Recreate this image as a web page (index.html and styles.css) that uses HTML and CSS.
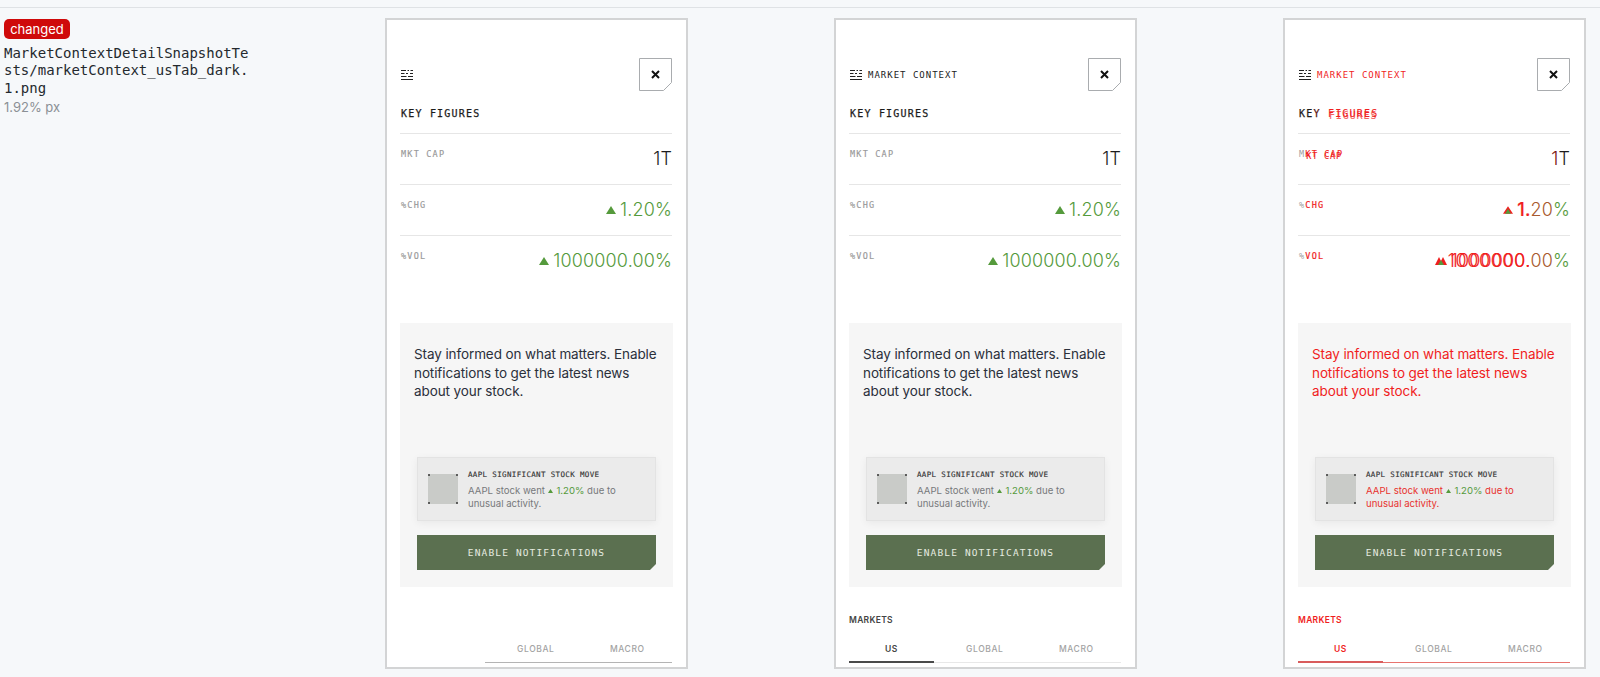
FILE: index.html
```html
<!DOCTYPE html>
<html lang="en">
<head>
    <meta charset="UTF-8">
    <title>marketContext_usTab_dark.1.png changed</title>
    <link rel="stylesheet" href="styles.css">
</head>
<body>
    <div class="topbar"></div>
    <div class="row">
        <div class="info">
            <span class="badge">changed</span>
            <div class="file-name">MarketContextDetailSnapshotTests/marketContext_usTab_dark.1.png</div>
            <div class="diff-size">1.92% px</div>
        </div>

        <div class="panels">
            <!-- before -->
            <div class="phone">
                <div class="header">
                    <div class="header-title">
                        <svg class="logo" viewBox="0 0 12 12"><path d="M0 1.5h5M6.5 1.5h1.5M9.5 1.5h2.5M0 4.5h3.5M5 4.5h2M9 4.5h3M0 7.5h5.5M7 7.5h5M0 10.5h12"/></svg>
                    </div>
                    <svg class="close" viewBox="0 0 33 33"><path class="close-box" d="M.5.5h32v24l-8 8H.5z"/><path class="close-x" d="M13 13l7 7M20 13l-7 7"/></svg>
                </div>
                <h2 class="section-title">KEY FIGURES</h2>
                <div class="stat"><span class="stat-label">MKT CAP</span><span class="stat-value">1T</span></div>
                <div class="stat"><span class="stat-label">%CHG</span><span class="stat-value up"><svg class="tri" viewBox="0 0 10 8"><path d="M5 0l5 8H0z"/></svg>1.20%</span></div>
                <div class="stat"><span class="stat-label">%VOL</span><span class="stat-value up"><svg class="tri" viewBox="0 0 10 8"><path d="M5 0l5 8H0z"/></svg>1000000.00%</span></div>

                <div class="promo">
                    <p class="promo-text">Stay informed on what matters. Enable notifications to get the latest news about your stock.</p>
                    <div class="notice">
                        <div class="thumb"><i></i><i></i><i></i><i></i></div>
                        <div>
                            <div class="notice-title">AAPL SIGNIFICANT STOCK MOVE</div>
                            <div class="notice-text">AAPL stock went <span class="up"><svg class="tri-small" viewBox="0 0 10 8"><path d="M5 0l5 8H0z"/></svg> 1.20%</span> due to<br>unusual activity.</div>
                        </div>
                    </div>
                    <div class="enable">ENABLE NOTIFICATIONS</div>
                </div>

                <div class="markets-title"></div>
                <div class="tabs tabs-old">
                    <div class="tab tab-empty"></div>
                    <div class="tab tab-global">GLOBAL</div>
                    <div class="tab tab-macro">MACRO</div>
                </div>
            </div>

            <!-- after -->
            <div class="phone">
                <div class="header">
                    <div class="header-title">
                        <svg class="logo" viewBox="0 0 12 12"><path d="M0 1.5h5M6.5 1.5h1.5M9.5 1.5h2.5M0 4.5h3.5M5 4.5h2M9 4.5h3M0 7.5h5.5M7 7.5h5M0 10.5h12"/></svg>
                        MARKET CONTEXT
                    </div>
                    <svg class="close" viewBox="0 0 33 33"><path class="close-box" d="M.5.5h32v24l-8 8H.5z"/><path class="close-x" d="M13 13l7 7M20 13l-7 7"/></svg>
                </div>
                <h2 class="section-title">KEY FIGURES</h2>
                <div class="stat"><span class="stat-label">MKT CAP</span><span class="stat-value">1T</span></div>
                <div class="stat"><span class="stat-label">%CHG</span><span class="stat-value up"><svg class="tri" viewBox="0 0 10 8"><path d="M5 0l5 8H0z"/></svg>1.20%</span></div>
                <div class="stat"><span class="stat-label">%VOL</span><span class="stat-value up"><svg class="tri" viewBox="0 0 10 8"><path d="M5 0l5 8H0z"/></svg>1000000.00%</span></div>

                <div class="promo">
                    <p class="promo-text">Stay informed on what matters. Enable notifications to get the latest news about your stock.</p>
                    <div class="notice">
                        <div class="thumb"><i></i><i></i><i></i><i></i></div>
                        <div>
                            <div class="notice-title">AAPL SIGNIFICANT STOCK MOVE</div>
                            <div class="notice-text">AAPL stock went <span class="up"><svg class="tri-small" viewBox="0 0 10 8"><path d="M5 0l5 8H0z"/></svg> 1.20%</span> due to<br>unusual activity.</div>
                        </div>
                    </div>
                    <div class="enable">ENABLE NOTIFICATIONS</div>
                </div>

                <div class="markets-title">MARKETS</div>
                <div class="tabs">
                    <div class="tab tab-active">US</div>
                    <div class="tab tab-global">GLOBAL</div>
                    <div class="tab tab-macro">MACRO</div>
                </div>
            </div>

            <!-- diff -->
            <div class="phone">
                <div class="header">
                    <div class="header-title">
                        <svg class="logo" viewBox="0 0 12 12"><path d="M0 1.5h5M6.5 1.5h1.5M9.5 1.5h2.5M0 4.5h3.5M5 4.5h2M9 4.5h3M0 7.5h5.5M7 7.5h5M0 10.5h12"/></svg>
                        <span class="red">MARKET CONTEXT</span>
                    </div>
                    <svg class="close" viewBox="0 0 33 33"><path class="close-box" d="M.5.5h32v24l-8 8H.5z"/><path class="close-x" d="M13 13l7 7M20 13l-7 7"/></svg>
                </div>
                <h2 class="section-title">KE<span class="dark-red">Y</span> <span class="smear">FIGURES<span class="ghost ghost-title">FIGURES</span></span></h2>
                <div class="stat"><span class="stat-label"><span class="gray">M</span><span class="smear">KT CAP<span class="ghost ghost-label">KT CAP</span></span></span><span class="stat-value"><span class="dark-red">1</span>T</span></div>
                <div class="stat"><span class="stat-label"><span class="gray">%</span><span class="red bold">CHG</span></span><span class="stat-value up"><svg class="tri" viewBox="0 0 12 9"><path class="tri-red" d="M6 0l6 9H0z"/><path d="M6 3l3.5 6h-7z"/></svg><span class="red bold">1.</span><span class="brown">20</span>%</span></div>
                <div class="stat"><span class="stat-label"><span class="gray">%</span><span class="red bold">VOL</span></span><span class="stat-value up"><svg class="tri tri-double" viewBox="0 0 12 8"><path class="tri-red" d="M4 0l4 8H0zM8 0l4 8H4z"/><path d="M6 3l3 5H3z"/></svg><span class="smear red">1000000.<span class="ghost ghost-value">1000000.</span></span><span class="brown">00</span>%</span></div>

                <div class="promo">
                    <p class="promo-text red">Stay informed on what matters. Enable notifications to get the latest news about your stock.</p>
                    <div class="notice">
                        <div class="thumb"><i></i><i></i><i></i><i></i></div>
                        <div>
                            <div class="notice-title">AAPL SIGNIFICANT STOCK MOVE</div>
                            <div class="notice-text red">AAPL stock went <span class="up"><svg class="tri-small" viewBox="0 0 10 8"><path d="M5 0l5 8H0z"/></svg> 1.20%</span> due to<br>unusual activity.</div>
                        </div>
                    </div>
                    <div class="enable">ENABLE NOTIFICATIONS</div>
                </div>

                <div class="markets-title red">MARKETS</div>
                <div class="tabs tabs-diff">
                    <div class="tab tab-active">US</div>
                    <div class="tab tab-global">GLOBAL</div>
                    <div class="tab tab-macro">MACRO</div>
                </div>
            </div>
        </div>
    </div>
</body>
</html>
```

FILE: styles.css
```css
body {
    margin: 0;
    height: 677px;
    overflow: hidden;
    background-color: #f6f8fa;
    font-family: Inter, "Liberation Sans", sans-serif;
}
.topbar {
    height: 7px;
    border-bottom: 1px solid #dfe2e5;
}
.row {
    display: flex;
    padding-top: 10px;
}
.info {
    width: 381px;
    padding-left: 4px;
}
.badge {
    display: inline-block;
    width: 66px;
    height: 20px;
    line-height: 20px;
    text-align: center;
    background-color: #cf0a0a;
    border-radius: 5px;
    color: #fff;
    font-size: 13px;
}
.file-name {
    width: 252px;
    margin-top: 6px;
    font-family: "DejaVu Sans Mono", monospace;
    font-size: 14px;
    line-height: 17.3px;
    word-break: break-all;
    color: #24292e;
}
.diff-size {
    font-size: 13px;
    line-height: 20px;
    color: #8b9095;
}
.panels {
    display: flex;
    gap: 146px;
}
.phone {
    box-sizing: border-box;
    width: 303px;
    height: 651px;
    padding: 38px 14px 0 13px;
    background-color: #fff;
    border: 2px solid #d3d4d5;
}
.header {
    display: flex;
    justify-content: space-between;
    align-items: center;
    height: 33px;
}
.header-title {
    display: flex;
    align-items: center;
    gap: 6px;
    font-family: "DejaVu Sans Mono", monospace;
    font-size: 9px;
    letter-spacing: 1px;
    color: #222;
}
.logo {
    width: 12px;
    height: 12px;
    margin-left: 1px;
    fill: none;
    stroke: #222;
    stroke-width: 1.2;
}
.close {
    width: 33px;
    height: 33px;
}
.close-box {
    fill: #fff;
    stroke: #a9acaf;
}
.close-x {
    fill: none;
    stroke: #111;
    stroke-width: 2;
}
.section-title {
    margin: 15px 0 11px 1px;
    font-family: "DejaVu Sans Mono", monospace;
    font-size: 10px;
    font-weight: normal;
    line-height: 16px;
    letter-spacing: 1.2px;
    -webkit-text-stroke: .25px #1c1c1c;
    color: #1c1c1c;
}
.stat {
    display: flex;
    justify-content: space-between;
    align-items: flex-start;
    height: 50px;
    border-top: 1px solid #e6e6e6;
}
.stat-label {
    margin: 13px 0 0 1px;
    font-family: "DejaVu Sans Mono", monospace;
    font-size: 8.5px;
    line-height: 14px;
    letter-spacing: 1.2px;
    -webkit-text-stroke: .15px #999;
    color: #999;
}
.stat-value {
    display: flex;
    align-items: center;
    margin-top: 14px;
    font-size: 18px;
    font-weight: 300;
    line-height: 22px;
    letter-spacing: .15px;
    color: #1c1c1c;
}
.up {
    color: #559a3c;
}
.tri {
    width: 10px;
    height: 8px;
    margin-right: 4px;
    fill: #559a3c;
}
.tri-red {
    fill: #f01e1e;
}
.tri-double {
    width: 12px;
}
.tri-small {
    width: 5px;
    height: 4px;
    margin: 0 1px 1px 0;
    fill: #559a3c;
}
.promo {
    height: 264px;
    box-sizing: border-box;
    margin: 37px -1px 0 0;
    padding: 22px 17px 0;
    background-color: #f6f6f6;
}
.promo-text {
    margin: 0 -10px 0 -3px;
    height: 56px;
    font-size: 13.5px;
    line-height: 18.5px;
    letter-spacing: -.1px;
    color: #2b303b;
}
.promo-text.red {
    color: #f01e1e;
}
.notice {
    display: flex;
    align-items: center;
    gap: 10px;
    box-sizing: border-box;
    height: 64px;
    margin-top: 56px;
    padding-left: 10px;
    background-color: #ebebeb;
    border: 1px solid #e3e3e3;
    box-shadow: 0 2px 8px rgba(0, 0, 0, .06);
}
.thumb {
    position: relative;
    flex: none;
    width: 30px;
    height: 30px;
    background-color: #c9cbc8;
    border-radius: 3px;
}
.thumb i {
    position: absolute;
    width: 2px;
    height: 2px;
    border-radius: 50%;
    background-color: #333;
}
.thumb i:nth-child(1) { left: 0; top: 0; }
.thumb i:nth-child(2) { right: 0; top: 0; }
.thumb i:nth-child(3) { left: 0; bottom: 0; }
.thumb i:nth-child(4) { right: 0; bottom: 0; }
.notice-title {
    font-family: "DejaVu Sans Mono", monospace;
    font-size: 7.5px;
    line-height: 11px;
    letter-spacing: .35px;
    -webkit-text-stroke: .15px #333;
    color: #333;
}
.notice-text {
    margin-top: 4px;
    width: 170px;
    font-size: 9.6px;
    line-height: 13px;
    color: #77797b;
}
.notice-text.red {
    color: #e8322e;
}
.enable {
    height: 35px;
    margin-top: 14px;
    line-height: 35px;
    text-align: center;
    background-color: #5b7050;
    clip-path: polygon(0 0, 100% 0, 100% calc(100% - 6px), calc(100% - 6px) 100%, 0 100%);
    font-family: "DejaVu Sans Mono", monospace;
    font-size: 9.5px;
    letter-spacing: 1.15px;
    color: #e6ece0;
}
.markets-title {
    height: 14px;
    margin-top: 26px;
    font-size: 8.5px;
    font-weight: 600;
    line-height: 14px;
    letter-spacing: .3px;
    color: #444;
}
.markets-title.red {
    color: #f01e1e;
}
.tabs {
    display: grid;
    grid-template-columns: 85px 1fr 1fr;
    margin-top: 9px;
}
.tab {
    height: 26px;
    line-height: 26px;
    text-align: center;
    font-size: 8.5px;
    font-weight: 500;
    letter-spacing: .6px;
    color: #a3a3a3;
    border-bottom: 1px solid #e8e8e8;
}
.tab-global {
    padding-left: 8px;
}
.tab-macro {
    padding-left: 4px;
}
.tab-active {
    font-weight: 600;
    color: #444;
    border-bottom: 2px solid #4a4a4a;
    height: 25px;
}
.tabs-old .tab {
    border-bottom: 1px solid #b4b4b4;
}
.tabs-old .tab-empty {
    border-bottom: none;
}
.tabs-diff .tab {
    border-bottom-color: #e8736e;
}
.tabs-diff .tab-active {
    color: #f01e1e;
    border-bottom-color: #d95c5c;
}
.red {
    color: #f01e1e;
}
.dark-red {
    color: #7a1410;
}
.brown {
    color: #a85a2e;
}
.gray {
    color: #a0a0a0;
    -webkit-text-stroke: 0;
}
.bold {
    font-weight: 500;
    -webkit-text-stroke: .2px #f01e1e;
}
.smear {
    position: relative;
    color: #f01e1e;
    -webkit-text-stroke: .1px #f01e1e;
}
.ghost {
    position: absolute;
    left: 0;
    top: 0;
    white-space: nowrap;
}
.ghost-title {
    left: 1px;
    letter-spacing: .9px;
    opacity: .7;
}
.ghost-label {
    left: 1px;
    letter-spacing: .8px;
}
.ghost-value {
    left: -3px;
    letter-spacing: .6px;
}
```
